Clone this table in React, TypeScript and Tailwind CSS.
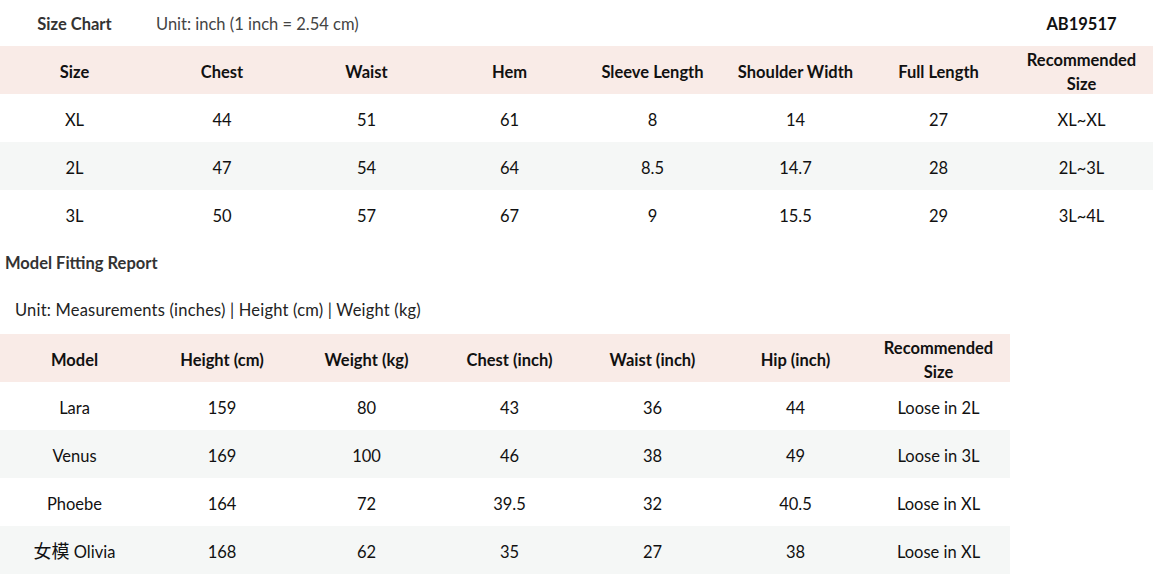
import React from "react";

const cols = ["w-[149px]", "w-[146px]", "w-[143px]", "w-[143px]", "w-[143px]", "w-[143px]", "w-[143px]", "w-[143px]"];

const sizeHead = ["Size", "Chest", "Waist", "Hem", "Sleeve Length", "Shoulder Width", "Full Length", "Recommended Size"];
const sizeRows = [
  ["XL", "44", "51", "61", "8", "14", "27", "XL~XL"],
  ["2L", "47", "54", "64", "8.5", "14.7", "28", "2L~3L"],
  ["3L", "50", "57", "67", "9", "15.5", "29", "3L~4L"],
];

const modelHead = ["Model", "Height (cm)", "Weight (kg)", "Chest (inch)", "Waist (inch)", "Hip (inch)", "Recommended Size"];
const modelRows = [
  ["Lara", "159", "80", "43", "36", "44", "Loose in 2L"],
  ["Venus", "169", "100", "46", "38", "49", "Loose in 3L"],
  ["Phoebe", "164", "72", "39.5", "32", "40.5", "Loose in XL"],
  ["女模 Olivia", "168", "62", "35", "27", "38", "Loose in XL"],
];

const Row = ({ cells, className, bold }: { cells: string[]; className?: string; bold?: boolean }) => (
  <div className={`flex h-[48px] ${className ?? ""}`}>
    {cells.map((c, i) => (
      <div
        key={i}
        className={`${cols[i]} shrink-0 flex items-center justify-center text-center leading-[24px] px-1 pt-[3px] ${bold ? "font-bold" : ""}`}
      >
        {c === "Recommended Size" ? (
          <span>
            Recommended
            <br />
            Size
          </span>
        ) : c.startsWith("女模") ? (
          <span>
            <span className="text-[18px]">女模</span> Olivia
          </span>
        ) : (
          c
        )}
      </div>
    ))}
  </div>
);

const SizeChart = () => {
  return (
    <div
      className="w-[1161px] h-[578px] bg-white text-[#111] text-[16.5px] overflow-hidden"
      style={{ fontFamily: "Lato, 'Noto Sans CJK SC', sans-serif" }}
    >
      <div className="flex h-[46px] items-center pt-[2px]">
        <div className="w-[149px] shrink-0 text-center font-bold text-[#333]">Size Chart</div>
        <div className="pl-[7px] text-[#444] flex-1">Unit: inch (1 inch = 2.54 cm)</div>
        <div className="w-[143px] shrink-0 text-center font-bold mr-[8px]">AB19517</div>
      </div>
      <div className="w-[1153px]">
        <Row cells={sizeHead} bold className="bg-[#f9ebe7]" />
        {sizeRows.map((r, i) => (
          <Row key={i} cells={r} className={i % 2 === 1 ? "bg-[#f5f7f6]" : ""} />
        ))}
      </div>
      <div className="h-[48px] flex items-center pl-[5px] pt-[2px] font-bold text-[#333]">Model Fitting Report</div>
      <div className="h-[48px] flex items-center pl-[15px] text-[#222] tracking-[0.2px]">
        Unit: Measurements (inches) | Height (cm) | Weight (kg)
      </div>
      <div className="w-[1010px]">
        <Row cells={modelHead} bold className="bg-[#f9ebe7]" />
        {modelRows.map((r, i) => (
          <Row key={i} cells={r} className={i % 2 === 1 ? "bg-[#f5f7f6]" : ""} />
        ))}
      </div>
    </div>
  );
};

export default function App() {
  return <SizeChart />;
}
